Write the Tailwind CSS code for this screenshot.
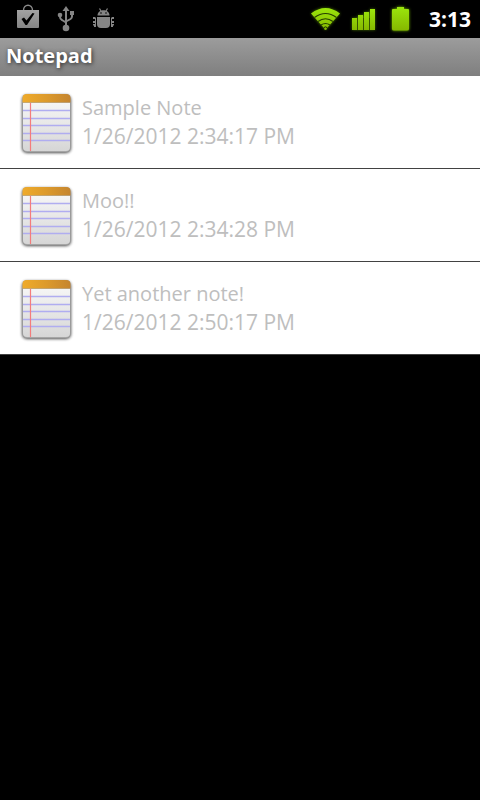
<!DOCTYPE html>
<html lang="en">
<head>
<meta charset="utf-8">
<meta name="viewport" content="width=device-width, initial-scale=1">
<title>Notepad</title>
<script src="https://cdn.jsdelivr.net/npm/@tailwindcss/browser@4"></script>
</head>
<body class="min-h-screen bg-black font-['Open_Sans','Noto_Sans',sans-serif]">
<svg class="absolute size-0" aria-hidden="true">
  <defs>
    <linearGradient id="gray" x1="0" y1="0" x2="0" y2="1"><stop offset="0" stop-color="#a2a2a2"/><stop offset="1" stop-color="#858585"/></linearGradient>
    <linearGradient id="green" x1="0" y1="0" x2="0" y2="1"><stop offset="0" stop-color="#9be60c"/><stop offset="1" stop-color="#86b800"/></linearGradient>
    <linearGradient id="paper" x1="0" y1="0" x2="0" y2="1"><stop offset="0" stop-color="#fafafa"/><stop offset="1" stop-color="#d6d6d6"/></linearGradient>
    <linearGradient id="binding" x1="0" y1="0" x2="1" y2="0"><stop offset="0" stop-color="#efab2b"/><stop offset=".5" stop-color="#dc9a2c"/><stop offset="1" stop-color="#c5852f"/></linearGradient>
    <filter id="glow" x="-30%" y="-30%" width="160%" height="160%"><feGaussianBlur stdDeviation="1.5"/></filter>
    <filter id="shade" x="-20%" y="-20%" width="140%" height="140%"><feGaussianBlur stdDeviation="1.5"/></filter>
    <symbol id="note" viewBox="0 0 72 72">
      <rect x="12" y="9" width="49" height="58" rx="5" fill="#000" opacity=".7" filter="url(#shade)"/>
      <rect x="12.500" y="8" width="48" height="58" rx="4.500" fill="#a6a6a6"/>
      <rect x="13" y="9" width="47" height="56" rx="4" fill="url(#paper)"/>
      <path d="M12.500 16.500V12Q12.500 8 17 8H56Q60.500 8 60.500 12V16.500Z" fill="url(#binding)"/>
      <path d="M13 16.500H60" stroke="#8c7040" stroke-width="1" opacity=".4"/>
      <path d="M13 24.500H60M13 32.500H60M13 39.500H60M13 47.500H60M13 54.500H60" stroke="#b0adf0" stroke-width="1.300"/>
      <path d="M20.500 17V65" stroke="#f47c7c" stroke-width="1.200"/>
    </symbol>
  </defs>
</svg>

<div class="flex h-[38px] items-center justify-between pr-[9px] pl-[14px]">
  <div class="flex items-center gap-[10px]">
    <svg class="h-[38px] w-7" viewBox="0 0 28 38" role="img" aria-label="Market">
      <path d="M9.500 10.500C9.500 3.500 18.500 3.500 18.500 10.500" fill="none" stroke="#8a8a8a" stroke-width="1.400"/>
      <path d="M3 10H25V27Q25 28 24 28H4Q3 28 3 27Z" fill="url(#gray)"/>
      <path d="M7.500 19L10 17.500L12.500 20.500L18.500 13L20.500 13.500L13 25H11.500Z" fill="#000"/>
    </svg>
    <svg class="h-[38px] w-7" viewBox="0 0 28 38" role="img" aria-label="USB connected">
      <g fill="none" stroke="#858585" stroke-width="2"><path d="M14 8V27"/><path d="M8 15V17Q8 19 10 20L14 22.500"/><path d="M20 13V16.500Q20 18 18.500 19L14 21.500"/></g>
      <g fill="#858585"><path d="M14 6L17.500 11H10.500Z"/><circle cx="8" cy="15" r="2.300"/><path d="M18 11H22V15H18Z"/><circle cx="14" cy="28" r="3.300"/></g>
    </svg>
    <svg class="h-[38px] w-7" viewBox="0 0 28 38" role="img" aria-label="USB debugging">
      <g fill="#858585"><path d="M7.500 15.500C7.500 8.500 19.500 8.500 19.500 15.500Z"/><path d="M7 17H20V24Q20 28 16 28H11Q7 28 7 24Z"/></g>
      <path d="M9.500 8.500L11 11M17.500 8.500L16 11" stroke="#858585" stroke-width="1.200"/>
      <path d="M3 17H5L6 18V27H4V25.500H3V24H5V23H3V21H5V19H3ZM24 17H22L21 18V27H23V25.500H24V24H22V23H24V21H22V19H24Z" fill="#858585"/>
      <circle cx="11" cy="13" r=".8" fill="#000"/><circle cx="16" cy="13" r=".8" fill="#000"/>
    </svg>
  </div>
  <div class="flex items-center gap-[2px]">
    <svg class="h-[38px] w-[38px]" viewBox="0 0 38 38" role="img" aria-label="Wi-Fi">
      <path d="M5 13.500Q19.500 2.500 34 13.500L19.500 30Z" fill="#69a800" filter="url(#glow)" opacity=".7"/>
      <path d="M5 13.500Q19.500 2.500 34 13.500L21 28Q21 30 19.500 30Q18 30 18 28Z" fill="url(#green)"/>
      <g fill="none" stroke="#264000" stroke-width="1.200"><path d="M8.500 17.500Q19.500 9.500 30.500 17.500"/><path d="M12 21.500Q19.500 16 27 21.500"/><path d="M15 25Q19.500 22 24 25"/><path d="M18 28Q19.500 25.500 21 28"/></g>
    </svg>
    <svg class="h-[38px] w-[38px]" viewBox="0 0 38 38" role="img" aria-label="Signal strength">
      <path d="M6 18H12V15H18V12H24V9H29V30H6Z" fill="#69a800" filter="url(#glow)" opacity=".65"/>
      <path d="M6 18H29V30H6Z" fill="#355400"/>
      <path d="M6 18H11V30H6ZM12 15H17V30H12ZM18 12H23V30H18ZM24 9H29V30H24Z" fill="url(#green)"/>
    </svg>
    <svg class="h-[38px] w-[38px]" viewBox="1 0 38 38" role="img" aria-label="Battery full">
      <path d="M7 10Q7 9 8 9H12V7H19V9H23Q24 9 24 10V29Q24 30.500 22 30.500H9Q7 30.500 7 29Z" fill="#78bf00" filter="url(#glow)"/>
      <path d="M7 10Q7 9 8 9H12V7H19V9H23Q24 9 24 10V29Q24 30.500 22 30.500H9Q7 30.500 7 29Z" fill="url(#green)"/>
    </svg>
    <time class="ml-[3px] text-[21px] leading-[38px] font-bold text-white">3:13</time>
  </div>
</div>

<header class="h-[38px] bg-linear-to-b from-[#9c9c9c] to-[#7f7f7f] px-[6px]">
  <h1 class="text-[20px] leading-[36px] font-bold text-white [text-shadow:1px_1px_4px_#000000b0]">Notepad</h1>
</header>

<ul class="bg-white text-[21px] leading-[29px] text-[#bebebe]">
  <li class="border-b border-[#424242]">
    <a href="#note-1" class="flex h-[92px] items-center pl-[10px]">
      <svg class="size-[72px] shrink-0" aria-hidden="true"><use href="#note"/></svg>
      <span class="flex flex-col"><span class="text-[20px] leading-[29px]">Sample Note</span><span>1/26/2012 2:34:17 PM</span></span>
    </a>
  </li>
  <li class="border-b border-[#424242]">
    <a href="#note-2" class="flex h-[92px] items-center pl-[10px]">
      <svg class="size-[72px] shrink-0" aria-hidden="true"><use href="#note"/></svg>
      <span class="flex flex-col"><span class="text-[20px] leading-[29px]">Moo!!</span><span>1/26/2012 2:34:28 PM</span></span>
    </a>
  </li>
  <li class="border-b border-[#424242]">
    <a href="#note-3" class="flex h-[92px] items-center pl-[10px]">
      <svg class="size-[72px] shrink-0" aria-hidden="true"><use href="#note"/></svg>
      <span class="flex flex-col"><span class="text-[20px] leading-[29px]">Yet another note!</span><span>1/26/2012 2:50:17 PM</span></span>
    </a>
  </li>
</ul>
</body>
</html>
